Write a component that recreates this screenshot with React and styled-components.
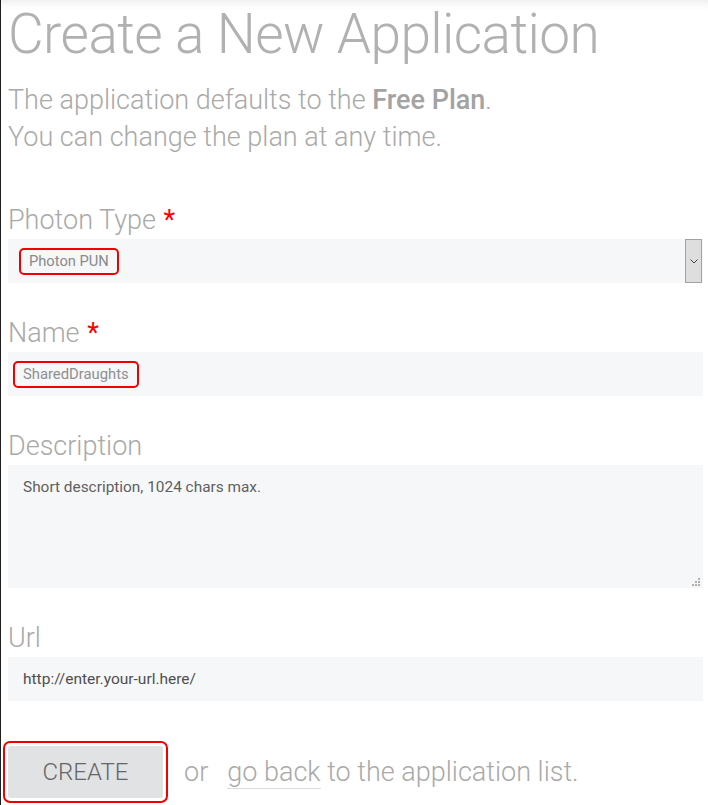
import React from "react";
import styled, { createGlobalStyle } from "styled-components";

const Global = createGlobalStyle`
  html, body { margin: 0; padding: 0; background: #fff; }
  body { font-family: Roboto, "Liberation Sans", sans-serif; }
  * { box-sizing: border-box; }
`;

const Page = styled.div`
  min-height: 100vh;
  border-left: 1px solid #1e1e1e;
  padding: 3px 5px 0 7px;
  box-shadow: inset 0 12px 12px -12px rgba(0, 0, 0, 0.12);
  overflow: hidden;
`;

const Title = styled.h1`
  margin: 0;
  font-size: 55px;
  line-height: 62px;
  font-weight: 300;
  letter-spacing: -0.6px;
  color: #b1b1b1;
`;

const Intro = styled.p`
  margin: 17px 0 46px;
  font-size: 27px;
  line-height: 37px;
  font-weight: 300;
  color: #a9a9a9;
  strong { font-weight: 500; color: #a3a3a3; }
`;

const Group = styled.div`
  margin-bottom: 32px;
`;

const Label = styled.label`
  display: block;
  margin-bottom: 1px;
  font-size: 27px;
  line-height: 36px;
  font-weight: 300;
  color: #a9a9a9;
`;

const Req = styled.span`
  color: #ff0000;
  font-weight: 400;
  margin-left: 1px;
`;

const Field = styled.div`
  position: relative;
  display: flex;
  align-items: ${(p) => (p.$multi ? "flex-start" : "center")};
  height: ${(p) => p.$h || 44}px;
  padding: ${(p) => (p.$multi ? "12px" : "0")} 0 0 ${(p) => p.$pl || 15}px;
  background: #f6f7f9;
  font-size: ${(p) => p.$fs || 15.5}px;
  line-height: 20px;
  color: ${(p) => p.$color || "#555"};
`;

const Marked = styled.span`
  display: inline-block;
  border: 2px solid #f20000;
  border-radius: 5px;
  padding: 0 8px;
  line-height: 23px;
`;

const DropButton = styled.span`
  align-self: stretch;
  margin-left: auto;
  margin-right: 1px;
  width: 17px;
  background: #dedede;
  border: 1px solid #a2a2a2;
  display: flex;
  align-items: center;
  justify-content: center;
`;

const Grip = styled.svg`
  position: absolute;
  right: 2px;
  bottom: 1px;
`;

const Actions = styled.div`
  display: flex;
  align-items: center;
  gap: 20px;
  margin-top: 45px;
  font-size: 27px;
  font-weight: 300;
  color: #a9a9a9;
`;

const CreateButton = styled.button`
  width: 155px;
  height: 52px;
  border: none;
  border-radius: 2px;
  background: #e1e2e4;
  color: #666;
  font-family: inherit;
  font-size: 24px;
  font-weight: 300;
  outline: 2px solid #f20000;
  outline-offset: 3px;
  padding: 0;
`;

const Or = styled.span`
  margin-left: 1px;
  margin-right: -1px;
`;

const BackLink = styled.a`
  color: #a9a9a9;
  text-decoration: none;
  border-bottom: 1px solid #dcdcdc;
`;

export default function App() {
  return (
    <>
      <Global />
      <Page>
        <Title>Create a New Application</Title>
        <Intro>
          The application defaults to the <strong>Free Plan</strong>.
          <br />
          You can change the plan at any time.
        </Intro>

        <Group>
          <Label>
            Photon Type <Req>*</Req>
          </Label>
          <Field $pl={11} $fs={14.7} $color="#8a8a8a">
            <Marked>Photon PUN</Marked>
            <DropButton>
              <svg width="8" height="5" viewBox="0 0 8 5">
                <path d="M0.5 0.5 L4 4 L7.5 0.5" fill="none" stroke="#444" strokeWidth="1" />
              </svg>
            </DropButton>
          </Field>
        </Group>

        <Group>
          <Label>
            Name <Req>*</Req>
          </Label>
          <Field $pl={5} $fs={14.8} $color="#8f8f8f">
            <Marked>SharedDraughts</Marked>
          </Field>
        </Group>

        <Group>
          <Label>Description</Label>
          <Field $multi $h={123} $fs={15.4} $color="#5f5f5f">
            Short description, 1024 chars max.
            <Grip width="9" height="9" viewBox="0 0 9 9">
              <g fill="#b0b0b0">
                <rect x="6" y="0" width="2" height="2" />
                <rect x="3" y="3" width="2" height="2" />
                <rect x="6" y="3" width="2" height="2" />
                <rect x="0" y="6" width="2" height="2" />
                <rect x="3" y="6" width="2" height="2" />
                <rect x="6" y="6" width="2" height="2" />
              </g>
            </Grip>
          </Field>
        </Group>

        <Group>
          <Label>Url</Label>
          <Field $color="#4f4f4f">http://enter.your-url.here/</Field>
        </Group>

        <Actions>
          <CreateButton>CREATE</CreateButton>
          <Or>or</Or>
          <span>
            <BackLink href="#">go back</BackLink> to the application list.
          </span>
        </Actions>
      </Page>
    </>
  );
}
